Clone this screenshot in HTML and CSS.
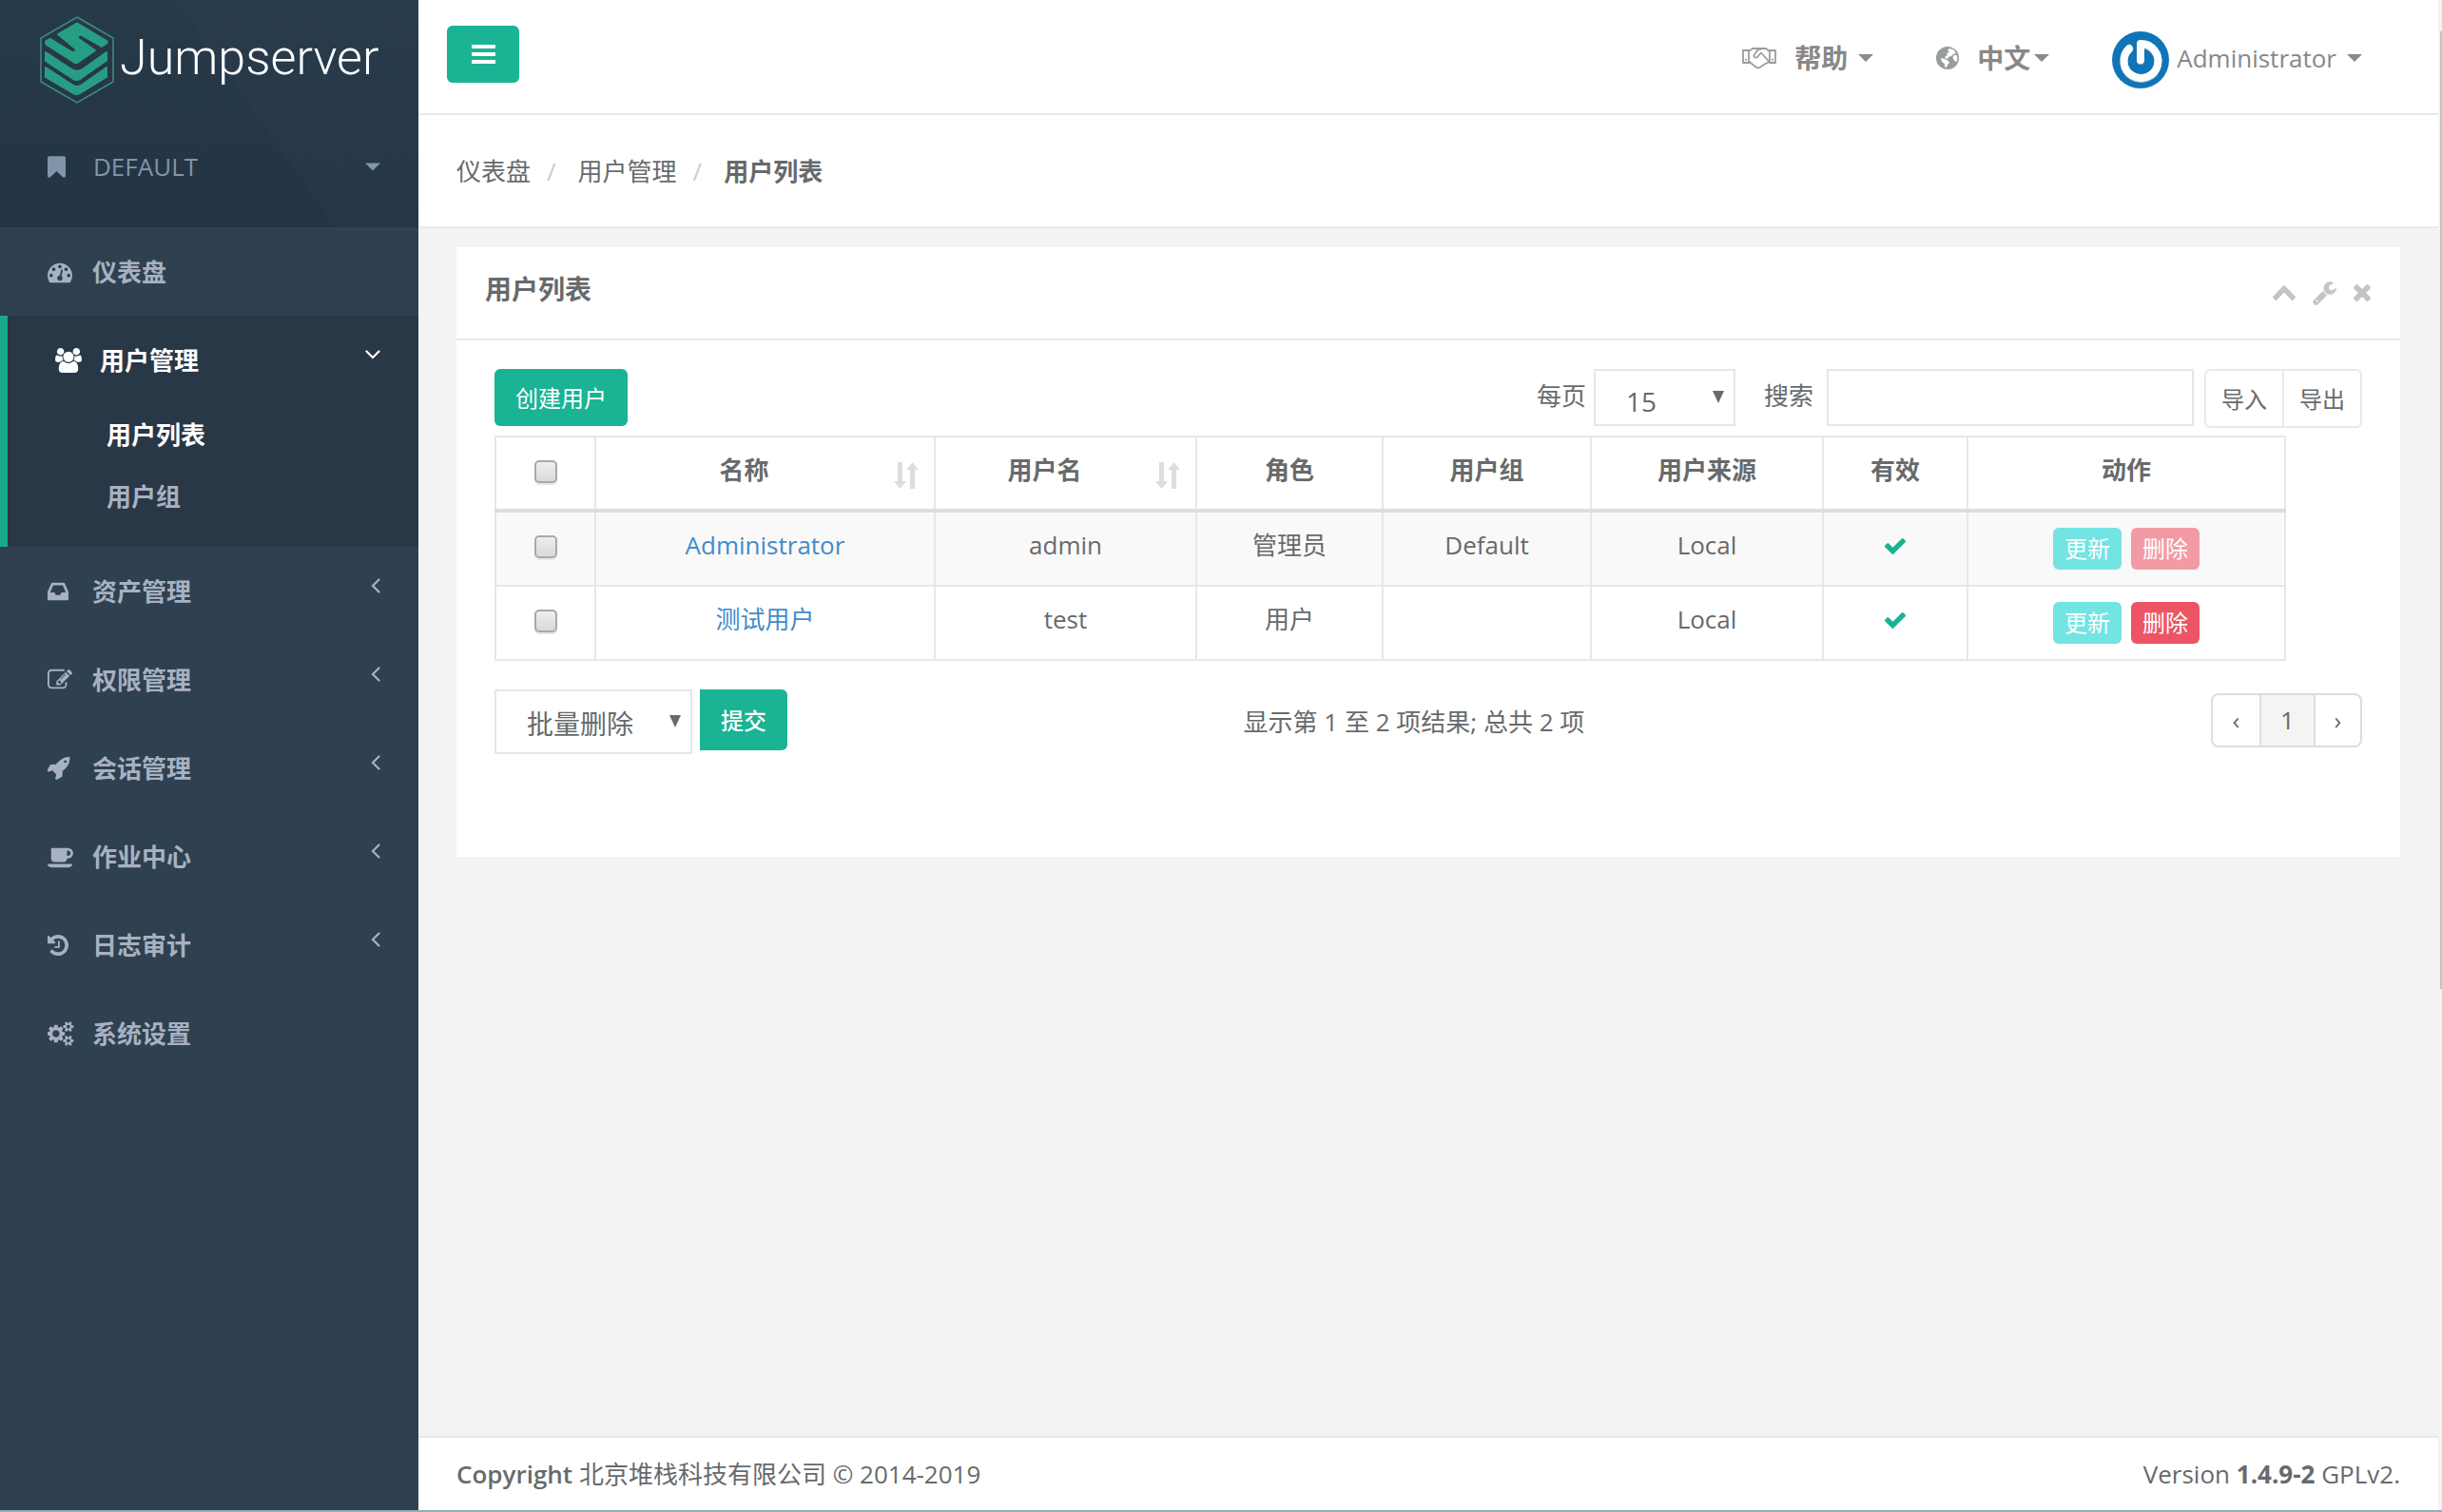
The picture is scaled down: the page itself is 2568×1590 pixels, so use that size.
FILE: index.html
```html
<!DOCTYPE html>
<html lang="zh-CN">
<head>
<meta charset="utf-8">
<title>用户列表 - Jumpserver</title>
<link rel="stylesheet" href="styles.css">
</head>
<body>
<svg width="0" height="0" class="sprite" aria-hidden="true">
  <symbol id="i-angle-left" viewBox="0 0 10 16"><path d="M8.500 1.500L2 8l6.500 6.500" fill="none" stroke="currentColor" stroke-width="2.200" stroke-linecap="round"/></symbol>
  <symbol id="i-caret" viewBox="0 0 16 8"><path d="M0 0h16L8 8z"/></symbol>
  <symbol id="i-down" viewBox="0 0 12 13"><path d="M0 0h12L6 13z"/></symbol>
  <symbol id="i-check" viewBox="121 270 1550 1252"><path d="M1671 566q0 40-28 68l-724 724-136 136q-28 28-68 28t-68-28l-136-136-362-362q-28-28-28-68t28-68l136-136q28-28 68-28t68 28l294 295 656-657q28-28 68-28t68 28l136 136q28 28 28 68z"/></symbol>
  <symbol id="i-sort" viewBox="0 0 26 28"><path d="M4 0h5v20h4L6.500 28 0 20h4zM17 28h5V8h4L19.500 0 13 8h4z"/></symbol>
</svg>
<div class="page">
  <aside class="sidebar">
    <div class="brand">
      <a class="logo" href="#">
        <svg width="78" height="92" viewBox="0 0 78 92" aria-hidden="true">
          <path d="M39 1l38 22v46L39 91 1 69V23z" fill="none" stroke="#3c8d83" stroke-width="1.500"/>
          <g fill="#279e83" stroke="#279e83" stroke-width="2" stroke-linejoin="round">
            <path d="M19 19L38 8q1-.5 2 0l30 18q1.500 1 0 2.500L65 32 43 19.500q-4 1-3 4L58 36 40 48.500q-2 1-4 0L7 30q-2-2 0-4l4-2 22 13.500q2 1 4-.5l2-1.500z"/>
            <path d="M6 38l28 18.500q5 2.500 10 0L70 38v8.500L42 66q-4 2-7 0L6 47z"/>
            <path d="M6 54l29 19q4 2 8 0l27-19v10L42 81q-4 2-7 0L6 64z"/>
          </g>
        </svg>
        <span class="wordmark">Jumpserver</span>
      </a>
      <a class="org" href="#">
        <svg class="org-icon" width="19" height="23" viewBox="0 0 1280 1512"><path d="M1164 0q23 0 44 9 33 13 52.500 41t19.500 62v1289q0 34-19.500 62t-52.500 41q-19 8-44 8-48 0-83-32l-441-424-441 424q-36 33-83 33-23 0-44-9-33-13-52.500-41t-19.500-62v-1289q0-34 19.500-62t52.500-41q21-9 44-9h1048z"/></svg>
        <span>DEFAULT</span>
        <svg class="end" width="16" height="9"><use href="#i-caret"/></svg>
      </a>
    </div>
    <nav>
      <ul class="menu">
        <li><a class="item" href="#"><span class="slot"><svg width="26" height="26" viewBox="0 0 1792 1792"><path d="M384 1152q0-53-37.500-90.500t-90.500-37.500-90.500 37.500-37.500 90.500 37.500 90.500 90.500 37.500 90.500-37.500 37.500-90.500zm192-448q0-53-37.500-90.500t-90.500-37.500-90.500 37.500-37.500 90.500 37.500 90.500 90.500 37.500 90.500-37.500 37.500-90.500zm428 481l101-382q6-26-7.500-48.500t-38.500-29.500-48 6.500-30 39.500l-101 382q-60 5-107 43.500t-63 98.500q-20 77 20 146t117 89 146-20 89-117q16-60-6-117t-72-91zm660-33q0-53-37.500-90.500t-90.500-37.500-90.500 37.500-37.500 90.500 37.500 90.500 90.500 37.500 90.500-37.500 37.500-90.500zm-640-640q0-53-37.500-90.500t-90.500-37.500-90.500 37.500-37.500 90.500 37.500 90.500 90.500 37.500 90.500-37.500 37.500-90.500zm448 192q0-53-37.500-90.500t-90.500-37.500-90.500 37.500-37.500 90.500 37.500 90.500 90.500 37.500 90.500-37.500 37.500-90.500zm320 448q0 261-141 483-19 29-54 29h-1402q-35 0-54-29-141-221-141-483 0-182 71-348t191-286 286-191 348-71 348 71 286 191 191 286 71 348z"/></svg></span>仪表盘</a></li>
        <li class="active">
          <a class="item" href="#"><span class="slot"><svg width="28" height="26" viewBox="-64 0 1920 1792"><path d="M529 896q-162 5-265 128h-134q-82 0-138-40.500t-56-118.500q0-353 124-353 6 0 43.500 21t97.500 42.500 119 21.500q67 0 133-23-5 37-5 66 0 139 81 256zm1071 637q0 120-73 189.500t-194 69.500h-874q-121 0-194-69.500t-73-189.500q0-53 3.500-103.500t14-109 26.500-108.500 43-97.500 62-81 85.500-53.500 111.500-20q10 0 43 21.500t73 48 107 48 135 21.500 135-21.500 107-48 73-48 43-21.500q61 0 111.500 20t85.500 53.500 62 81 43 97.500 26.500 108.500 14 109 3.500 103.500zm-1024-1277q0 106-75 181t-181 75-181-75-75-181 75-181 181-75 181 75 75 181zm704 384q0 159-112.500 271.500t-271.500 112.500-271.500-112.500-112.500-271.500 112.500-271.500 271.500-112.500 271.500 112.500 112.500 271.500zm576 225q0 78-56 118.500t-138 40.500h-134q-103-123-265-128 81-117 81-256 0-29-5-66 66 23 133 23 59 0 119-21.500t97.500-42.500 43.500-21q124 0 124 353zm-128-609q0 106-75 181t-181 75-181-75-75-181 75-181 181-75 181 75 75 181z"/></svg></span>用户管理<svg class="end" width="16" height="10" viewBox="0 0 16 10"><path d="M1.500 1.500L8 8l6.500-6.500" fill="none" stroke="currentColor" stroke-width="2.200" stroke-linecap="round"/></svg></a>
          <ul class="submenu">
            <li><a class="current" href="#">用户列表</a></li>
            <li><a href="#">用户组</a></li>
          </ul>
        </li>
        <li><a class="item" href="#"><span class="slot"><svg width="22" height="26" viewBox="128 0 1536 1792"><path d="M1151 960h316q-1-3-2.500-8.500t-2.500-7.500l-212-496h-708l-212 496q-1 3-2.500 8.500t-2.500 7.500h316l95 192h320zm513 30v482q0 26-19 45t-45 19h-1408q-26 0-45-19t-19-45v-482q0-62 25-123l238-552q10-25 36.500-42t52.500-17h832q26 0 52.500 17t36.500 42l238 552q25 61 25 123z"/></svg></span>资产管理<svg class="end" width="10" height="16"><use href="#i-angle-left"/></svg></a></li>
        <li><a class="item" href="#"><span class="slot"><svg width="26" height="26" viewBox="0 0 1792 1792"><path d="M888 1184l116-116-152-152-116 116v56h96v96h56zm440-720q-16-16-33 1l-350 350q-17 17-1 33t33-1l350-350q17-17 1-33zm80 594v190q0 119-84.500 203.500t-203.500 84.500h-832q-119 0-203.500-84.500t-84.500-203.500v-832q0-119 84.500-203.500t203.500-84.500h832q63 0 117 25 15 7 18 23 3 17-9 29l-49 49q-14 14-32 8-23-6-45-6h-832q-66 0-113 47t-47 113v832q0 66 47 113t113 47h832q66 0 113-47t47-113v-126q0-13 9-22l64-64q15-15 35-7t20 29zm-96-738l288 288-672 672h-288v-288zm444 132l-92 92-288-288 92-92q28-28 68-28t68 28l152 152q28 28 28 68t-28 68z"/></svg></span>权限管理<svg class="end" width="10" height="16"><use href="#i-angle-left"/></svg></a></li>
        <li><a class="item" href="#"><span class="slot"><svg width="24" height="26" viewBox="60 60 1640 1760"><path d="M1440 448q0-40-28-68t-68-28-68 28-28 68 28 68 68 28 68-28 28-68zm224-288q0 249-75.500 430.500t-253.500 360.500q-81 80-195 176l-20 379q-2 16-16 26l-384 224q-7 4-16 4-12 0-23-9l-64-64q-13-14-8-32l85-276-281-281-276 85q-3 1-9 1-14 0-23-9l-64-64q-17-19-5-39l224-384q10-14 26-16l379-20q96-114 176-195 188-187 358-258t431-71q14 0 24 9.500t10 22.500z"/></svg></span>会话管理<svg class="end" width="10" height="16"><use href="#i-angle-left"/></svg></a></li>
        <li><a class="item" href="#"><span class="slot"><svg width="27" height="26" viewBox="0 0 1856 1792"><path d="M1664 640q0-80-56-136t-136-56h-64v384h64q80 0 136-56t56-136zm-1664 768h1792q0 106-75 181t-181 75h-1280q-106 0-181-75t-75-181zm1856-768q0 159-112.500 271.500t-271.500 112.500h-64v32q0 92-66 158t-158 66h-704q-92 0-158-66t-66-158v-736q0-26 19-45t45-19h1152q159 0 271.500 112.500t112.500 271.500z"/></svg></span>作业中心<svg class="end" width="10" height="16"><use href="#i-angle-left"/></svg></a></li>
        <li><a class="item" href="#"><span class="slot"><svg width="22" height="26" viewBox="128 0 1536 1792"><path d="M1664 896q0 156-61 298t-164 245-245 164-298 61q-172 0-327-72.500t-264-204.500q-7-10-6.500-22.500t8.500-20.500l137-138q10-9 25-9 16 2 23 12 73 95 179 147t225 52q104 0 198.500-40.500t163.500-109.500 109.500-163.500 40.500-198.500-40.500-198.500-109.500-163.500-163.500-109.500-198.500-40.500q-98 0-188 35.500t-160 101.500l137 138q31 30 14 69-17 40-59 40h-448q-26 0-45-19t-19-45v-448q0-42 40-59 39-17 69 14l130 129q107-101 244.500-156.500t284.500-55.500q156 0 298 61t245 164 164 245 61 298zm-640-288v448q0 14-9 23t-23 9h-320q-14 0-23-9t-9-23v-64q0-14 9-23t23-9h224v-352q0-14 9-23t23-9h64q14 0 23 9t9 23z"/></svg></span>日志审计<svg class="end" width="10" height="16"><use href="#i-angle-left"/></svg></a></li>
        <li><a class="item" href="#"><span class="slot"><svg width="28" height="26" viewBox="0 0 1860 1792"><path d="M832 896q0-106-75-181t-181-75-181 75-75 181 75 181 181 75 181-75 75-181zm768 512q0-52-38-90t-90-38-90 38-38 90q0 53 37.500 90.500t90.500 37.500 90.500-37.500 37.500-90.500zm0-1024q0-52-38-90t-90-38-90 38-38 90q0 53 37.500 90.500t90.500 37.500 90.500-37.500 37.500-90.500zm-384 421v185q0 10-7 19.500t-16 10.500l-155 24q-11 35-32 76 34 48 90 115 7 11 7 20 0 12-7 19-23 30-82.500 89.500t-78.500 59.500q-11 0-21-7l-115-90q-37 19-77 31-11 108-23 155-7 24-30 24h-186q-11 0-20-7.500t-10-17.500l-23-153q-34-10-75-31l-118 89q-7 7-20 7-11 0-21-8-144-133-144-160 0-9 7-19 10-14 41-53t47-61q-23-44-35-82l-152-24q-10-1-17-9.500t-7-19.500v-185q0-10 7-19.500t16-10.500l155-24q11-35 32-76-34-48-90-115-7-11-7-20 0-12 7-20 22-30 82-89t79-59q11 0 21 7l115 90q34-18 77-32 11-108 23-154 7-24 30-24h186q11 0 20 7.500t10 17.500l23 153q34 10 75 31l118-89q8-7 20-7 11 0 21 8 144 133 144 160 0 8-7 19-12 16-42 54t-45 60q23 48 34 82l152 23q10 2 17 10.500t7 19.500zm640 533v140q0 16-149 31-12 27-30 52 51 113 51 138 0 4-4 7-122 71-124 71-8 0-46-47t-52-68q-20 2-30 2t-30-2q-14 21-52 68t-46 47q-2 0-124-71-4-3-4-7 0-25 51-138-18-25-30-52-149-15-149-31v-140q0-16 149-31 13-29 30-52-51-113-51-138 0-4 4-7 4-2 35-20t59-34 30-16q8 0 46 46.500t52 67.500q20-2 30-2t30 2q51-71 92-112l6-2q4 0 124 70 4 3 4 7 0 25-51 138 17 23 30 52 149 15 149 31zm0-1024v140q0 16-149 31-12 27-30 52 51 113 51 138 0 4-4 7-122 71-124 71-8 0-46-47t-52-68q-20 2-30 2t-30-2q-14 21-52 68t-46 47q-2 0-124-71-4-3-4-7 0-25 51-138-18-25-30-52-149-15-149-31v-140q0-16 149-31 13-29 30-52-51-113-51-138 0-4 4-7 4-2 35-20t59-34 30-16q8 0 46 46.500t52 67.500q20-2 30-2t30 2q51-71 92-112l6-2q4 0 124 70 4 3 4 7 0 25-51 138 17 23 30 52 149 15 149 31z"/></svg></span>系统设置</a></li>
      </ul>
    </nav>
  </aside>

  <div class="main">
    <header class="topbar">
      <button class="toggle" type="button" aria-label="菜单"><svg width="25" height="20" viewBox="0 0 25 20"><path d="M0 0h25v4H0zM0 8h25v4H0zM0 16h25v4H0z"/></svg></button>
      <div class="topnav">
        <a href="#"><svg class="hands" width="36" height="24" viewBox="0 0 36 24"><g fill="none" stroke="currentColor" stroke-width="1.800" stroke-linejoin="round" stroke-linecap="round"><path d="M7 4H1v13h6zM29 4h6v13h-6zM7 5l4-3h6l2 1M29 5l-4-3h-6l-3 2-3.500 5q-.5 3 3 2.500l4-4.500h1l7 8M28.500 15q-2 3-4 3l-6 4q-2 1-4-.500L7 15.500M4 13.500v.500M32 13.500v.500"/></g></svg><b>帮助</b><svg class="far" width="16" height="8"><use href="#i-caret"/></svg></a>
        <a href="#"><svg class="globe" width="24" height="24" viewBox="0 0 24 24"><circle cx="12" cy="12" r="12"/><path fill="#fff" d="M14 2l4 1 3 4-3 1-2 2-3 1-1 2-3-1 1-2 2-1-1-2 3-1-2-2zM5 12l4 1 4 2 1 2-2 2-1 3-2-1v-3l-3-2zM21.500 9l1 3-1 4-2-1-2-3 1-3z"/></svg><b>中文</b><svg class="near" width="16" height="8"><use href="#i-caret"/></svg></a>
        <a href="#"><svg class="avatar" width="60" height="60" viewBox="0 0 60 60" aria-hidden="true"><circle cx="30" cy="30" r="30" fill="#0f75b8"/><path d="M18 18a18 18 0 1 0 12-5v17" transform="translate(0 1)" fill="none" stroke="#9db4c6" stroke-width="8" stroke-linecap="round" stroke-linejoin="round"/><path d="M18 18a18 18 0 1 0 12-5v17" fill="none" stroke="#fff" stroke-width="8" stroke-linecap="round" stroke-linejoin="round"/></svg><span class="user">Administrator</span><svg class="far" width="16" height="8"><use href="#i-caret"/></svg></a>
      </div>
    </header>

    <nav aria-label="breadcrumb">
      <ol class="crumbs">
        <li><a href="#">仪表盘</a></li>
        <li><a href="#">用户管理</a></li>
        <li><strong>用户列表</strong></li>
      </ol>
    </nav>

    <main class="content">
      <section class="card">
        <div class="card-head">
          <h1>用户列表</h1>
          <div class="tools">
            <button type="button" aria-label="收起"><svg width="24" height="16" viewBox="90 480 1612 1040" preserveAspectRatio="none"><path d="M1683 1331l-166 165q-19 19-45 19t-45-19l-531-531-531 531q-19 19-45 19t-45-19l-166-165q-19-19-19-45.500t19-45.500l742-741q19-19 45-19t45 19l742 741q19 19 19 45.500t-19 45.500z"/></svg></button>
            <button type="button" aria-label="设置"><svg width="25" height="25" viewBox="80 110 1650 1662"><path d="M448 1472q0-26-19-45t-45-19-45 19-19 45 19 45 45 19 45-19 19-45zm644-420l-682 682q-37 37-90 37-52 0-91-37l-106-108q-38-36-38-90 0-53 38-91l681-681q39 98 114.500 173.500t173.500 114.500zm634-435q0 39-23 106-47 134-164.500 217.500t-258.500 83.500q-185 0-316.500-131.500t-131.500-316.500 131.500-316.500 316.500-131.500q58 0 121.500 16.500t107.500 46.500q16 11 16 28t-16 28l-293 169v224l193 107q5-3 79-48.500t135.500-81 70.500-35.500q15 0 23.500 10t8.500 25z"/></svg></button>
            <button type="button" aria-label="关闭"><svg width="18" height="18" viewBox="302 366 1188 1188"><path d="M1490 1322q0 40-28 68l-136 136q-28 28-68 28t-68-28l-294-294-294 294q-28 28-68 28t-68-28l-136-136q-28-28-28-68t28-68l294-294-294-294q-28-28-28-68t28-68l136-136q28-28 68-28t68 28l294 294 294-294q28-28 68-28t68 28l136 136q28 28 28 68t-28 68l-294 294 294 294q28 28 28 68z"/></svg></button>
          </div>
        </div>
        <div class="card-body">
          <div class="toolbar">
            <button class="btn primary" type="button">创建用户</button>
            <div class="filters">
              <label for="size">每页</label>
              <span class="select size"><select id="size"><option>15</option></select><svg width="12" height="13"><use href="#i-down"/></svg></span>
              <label class="search-label" for="search">搜索</label>
              <input class="search" id="search" type="text">
              <div class="group"><button type="button">导入</button><button type="button">导出</button></div>
            </div>
          </div>

          <table>
            <colgroup><col class="c-check"><col class="c-name"><col class="c-login"><col class="c-role"><col class="c-group"><col class="c-source"><col class="c-valid"><col class="c-action"></colgroup>
            <thead>
              <tr>
                <th><input type="checkbox" aria-label="全选"></th>
                <th><div class="sort"><span>名称</span><svg width="26" height="28"><use href="#i-sort"/></svg></div></th>
                <th><div class="sort"><span>用户名</span><svg width="26" height="28"><use href="#i-sort"/></svg></div></th>
                <th>角色</th><th>用户组</th><th>用户来源</th><th>有效</th><th>动作</th>
              </tr>
            </thead>
            <tbody>
              <tr>
                <td><input type="checkbox" aria-label="选择 Administrator"></td>
                <td><a href="#">Administrator</a></td><td>admin</td><td>管理员</td><td>Default</td><td>Local</td>
                <td><svg class="ok" width="22" height="18"><use href="#i-check"/></svg></td>
                <td><div class="actions"><button class="xs info" type="button">更新</button><button class="xs danger" type="button" disabled>删除</button></div></td>
              </tr>
              <tr>
                <td><input type="checkbox" aria-label="选择 测试用户"></td>
                <td><a href="#">测试用户</a></td><td>test</td><td>用户</td><td></td><td>Local</td>
                <td><svg class="ok" width="22" height="18"><use href="#i-check"/></svg></td>
                <td><div class="actions"><button class="xs info" type="button">更新</button><button class="xs danger" type="button">删除</button></div></td>
              </tr>
            </tbody>
          </table>

          <div class="below">
            <div class="bulk">
              <span class="select batch"><select aria-label="批量操作"><option>批量删除</option></select><svg width="12" height="13"><use href="#i-down"/></svg></span>
              <button class="btn primary submit" type="button">提交</button>
            </div>
            <p class="info-text">显示第 1 至 2 项结果; 总共 2 项</p>
            <div class="pager"><a href="#">‹</a><a class="on" href="#">1</a><a href="#">›</a></div>
          </div>
        </div>
      </section>
    </main>

    <footer class="footer">
      <span><strong>Copyright</strong> 北京堆栈科技有限公司 © 2014-2019</span>
      <span>Version <b>1.4.9-2</b> GPLv2.</span>
    </footer>
  </div>
  <div class="track" aria-hidden="true"><div class="thumb"></div></div>
</div>
</body>
</html>
```

FILE: styles.css
```css
* { box-sizing: border-box; }
body {
  margin: 0;
  background: #f3f3f4;
  color: #676a6c;
  font: 26px/37px "Open Sans", "Noto Sans CJK SC", sans-serif;
}
a { color: inherit; text-decoration: none; }
ul, ol { list-style: none; margin: 0; padding: 0; }
button, select, input { font: inherit; color: inherit; margin: 0; }
svg { fill: currentColor; flex: none; display: block; }
.sprite { position: absolute; }

.page { display: flex; min-height: 100vh; border-bottom: 2px solid #93aeb4; }

/* Sidebar */
.sidebar { flex: 0 0 440px; background: #2f4050; color: #a7b1c2; }
.brand {
  height: 239px;
  padding-top: 17px;
  background:
    linear-gradient(55deg, transparent 58%, rgba(255, 255, 255, .01) 58%),
    linear-gradient(#273a49, #233444);
}
.logo { display: flex; gap: 6px; padding-left: 42px; height: 92px; }
.wordmark { color: #fff; font: 300 52px/88px Roboto, sans-serif; }
.org { display: flex; align-items: center; padding: 0 40px 0 50px; margin-top: 48px; color: #8095a8; }
.org-icon { margin-right: 29px; }
.end { margin-left: auto; }
.item { display: flex; align-items: center; height: 93px; padding: 1px 40px 0 50px; font-weight: 700; }
.item .end { margin-bottom: 12px; }
.slot { width: 47px; }
.active { border-left: 8px solid #19aa8d; background: #293846; padding-bottom: 20px; }
.active > .item, .submenu .current { color: #fff; }
.submenu a { display: block; padding-left: 104px; font-weight: 700; line-height: 65px; }

/* Top bar */
.main { flex: 1; min-width: 0; display: flex; flex-direction: column; }
.topbar { display: flex; justify-content: space-between; align-items: flex-start; height: 121px; padding: 27px 80px 0 30px; background: #fff; border-bottom: 2px solid #e7eaec; }
.toggle { display: grid; place-items: center; width: 76px; height: 60px; border: 0; border-radius: 6px; background: #1ab394; color: #fff; }
.topnav { display: flex; gap: 66px; padding-top: 2px; color: #888; }
.topnav a { display: flex; align-items: center; }
.topnav b { font-size: 28px; font-weight: 700; }
.topnav svg { color: #8a8a8c; }
.topnav .hands, .topnav .globe { margin-right: 19px; color: #999c9e; }
.topnav .avatar { margin-top: 4px; }
.near { margin-left: 4px; }
.far { margin-left: 11px; }
.user { margin-left: 8px; }

.crumbs { display: flex; align-items: center; height: 119px; padding: 2px 0 0 40px; background: #fff; border-bottom: 2px solid #e7eaec; }
.crumbs li + li::before { content: "/"; color: #ccc; padding: 0 23px 0 17px; }

/* Card */
.content { flex: 1; padding: 20px 40px; }
.card { background: #fff; }
.card-head { display: flex; justify-content: space-between; align-items: center; height: 98px; padding: 0 31px 0 30px; border-bottom: 2px solid #e7eaec; }
h1 { margin: 0 0 8px; font-size: 28px; line-height: 40px; font-weight: 700; }
.tools { display: flex; align-items: center; gap: 18px; color: #c4c4c4; }
.tools button { padding: 0; border: 0; background: none; color: inherit; }
.card-body { padding: 30px 40px 108px; }

.toolbar { display: flex; justify-content: space-between; align-items: flex-start; height: 70px; }
.btn { border: 0; border-radius: 6px; font-size: 24px; height: 60px; padding: 0 22px; }
.primary { background: #1ab394; color: #fff; }
.filters { display: flex; align-items: flex-start; }
.filters label { line-height: 56px; }
.select { display: inline-grid; align-items: center; }
.select select { grid-area: 1 / 1; appearance: none; width: 100%; height: 100%; border: 2px solid #e5e6e7; border-radius: 0; background: #fff; font-size: 28px; padding: 8px 32px 0; }
.select svg { grid-area: 1 / 1; justify-self: end; margin-right: 12px; margin-bottom: 2px; pointer-events: none; }
.size { width: 149px; height: 60px; margin: 0 30px 0 8px; }
.search { width: 386px; height: 60px; margin: 0 11px 0 14px; border: 2px solid #e5e6e7; padding: 0 20px; }
.group { display: flex; border: 2px solid #e7eaec; border-radius: 6px; }
.group button { border: 0; background: none; width: 80px; height: 58px; padding: 0; font-size: 24px; }
.group button + button { border-left: 2px solid #e7eaec; width: 82px; }

/* Table */
table { width: calc(100% - 80px); table-layout: fixed; border-collapse: collapse; text-align: center; }
.c-check { width: 105px; }
.c-name { width: 357px; }
.c-login { width: 275px; }
.c-role { width: 196px; }
.c-group { width: 219px; }
.c-source { width: 244px; }
.c-valid { width: 152px; }
.c-action { width: 334px; }
th, td { border: 2px solid #e7e7e7; padding: 16px; height: 78px; vertical-align: top; }
th { border-bottom: 4px solid #ddd; font-weight: 700; height: 78px; }
tbody tr:nth-child(odd) { background: #f9f9f9; }
td a { color: #428bca; }
.sort { display: flex; gap: 18px; }
.sort span { flex: 1; }
.sort svg { color: #ddd; margin-top: 10px; }
.ok { color: #1ab394; margin: 10px auto 0; }
input[type="checkbox"] { appearance: none; display: block; width: 24px; height: 24px; margin: 8px auto 0; border: 2px solid #a9a9a9; border-radius: 5px; background: linear-gradient(#eee, #d9d9d9); box-shadow: 0 2px 1px #e6e6e6; }
.actions { display: flex; justify-content: center; gap: 10px; }
.xs { width: 72px; height: 44px; padding: 0; border: 0; border-radius: 6px; color: #fff; font-size: 24px; line-height: 44px; }
.info { background: #72e4e4; }
.danger { background: #ed5565; }
.danger:disabled { background: #f29ba4; }

.below { display: grid; grid-template-columns: 40% 1fr auto; align-items: start; margin-top: 30px; }
.bulk { display: flex; align-items: flex-start; gap: 8px; }
.batch { width: 208px; height: 68px; }
.batch select { padding-top: 4px; }
.submit { height: 64px; border-radius: 0 6px 6px 0; font-weight: 500; }
.info-text { margin: 16px 0 0 2px; }
.pager { display: flex; margin-top: 4px; border: 2px solid #ddd; border-radius: 8px; overflow: hidden; }
.pager a { width: 49px; line-height: 53px; text-align: center; }
.pager a + a { border-left: 2px solid #ddd; }
.pager .on { width: 57px; background: #f4f4f4; }

/* Footer */
.footer { display: flex; justify-content: space-between; padding: 20px 40px 19px; background: #fff; border-top: 2px solid #e7eaec; }
.footer strong { font-weight: 600; }

.track { flex: 0 0 4px; padding-top: 33px; }
.thumb { width: 2px; height: 1007px; margin-left: 2px; background: #c1c1c1; }
```
